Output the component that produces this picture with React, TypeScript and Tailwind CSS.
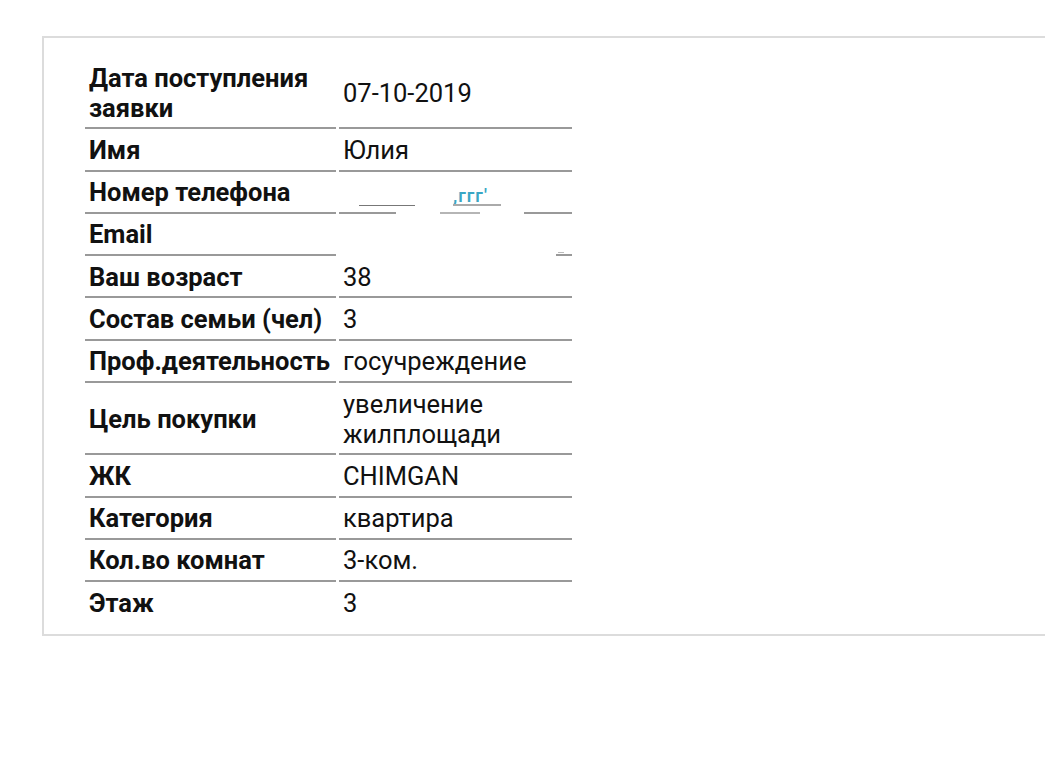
import React from 'react';

const rows: [string, string][] = [
  ['Дата поступления заявки', '07-10-2019'],
  ['Имя', 'Юлия'],
  ['Номер телефона', ''],
  ['Email', ''],
  ['Ваш возраст', '38'],
  ['Состав семьи (чел)', '3'],
  ['Проф.деятельность', 'госучреждение'],
  ['Цель покупки', 'увеличение жилплощади'],
  ['ЖК', 'CHIMGAN'],
  ['Категория', 'квартира'],
  ['Кол.во комнат', '3-ком.'],
  ['Этаж', '3'],
];

const cell = 'px-[4px] pt-[4.6px] pb-[4.7px] align-middle';

// redacted phone number: only scraps of the value and the rule below it remain
const PhoneCell = () => (
  <td className="w-[233px] p-0 align-bottom">
    <div className="flex h-[34px] items-end px-[20px] pb-[6px] gap-[38px]">
      <div className="w-[56px] h-[1px] bg-[#777]" />
      <div className="flex flex-col items-start">
        <span className="text-[18px] leading-[16px] font-semibold text-[#3aa6c4] tracking-[1px]">,ггг'</span>
        <div className="w-[48px] h-[2px] bg-[#aaa]" />
      </div>
    </div>
    <div className="flex h-[2px] justify-between">
      <div className="w-[57px] bg-[#999]" />
      <div className="w-[40px] bg-[#b5b5b5]" />
      <div className="w-[48px] bg-[#999]" />
    </div>
  </td>
);

const EmailCell = () => (
  <td className="w-[233px] p-0 align-bottom">
    <div className="flex justify-end pr-[8px] pb-[1px]">
      <div className="w-[6px] h-[1px] bg-[#bbb]" />
    </div>
    <div className="flex h-[2px] justify-end">
      <div className="w-[16px] bg-[#999]" />
    </div>
  </td>
);

export default function App() {
  return (
    <div className="min-h-[776px] w-[1045px] bg-white overflow-hidden pt-[36px] pl-[42px] font-['Roboto',sans-serif] text-[25.5px] leading-[30px] text-[#111]">
      <div className="w-[1100px] h-[600px] border-2 border-[#dcdcdc] pt-[19px] pl-[38px]">
        <table className="border-separate border-spacing-x-[3px] border-spacing-y-[1px]">
          <tbody>
            {rows.map(([k, v], i) => {
              const last = i === rows.length - 1;
              const line = last ? '' : 'border-b-2 border-[#999]';
              return (
                <tr key={k}>
                  <td className={`${cell} ${line} w-[251px] font-bold`}>{k}</td>
                  {k === 'Номер телефона' ? (
                    <PhoneCell />
                  ) : k === 'Email' ? (
                    <EmailCell />
                  ) : (
                    <td className={`${cell} ${line} w-[233px] font-normal`}>{v}</td>
                  )}
                </tr>
              );
            })}
          </tbody>
        </table>
      </div>
    </div>
  );
}
